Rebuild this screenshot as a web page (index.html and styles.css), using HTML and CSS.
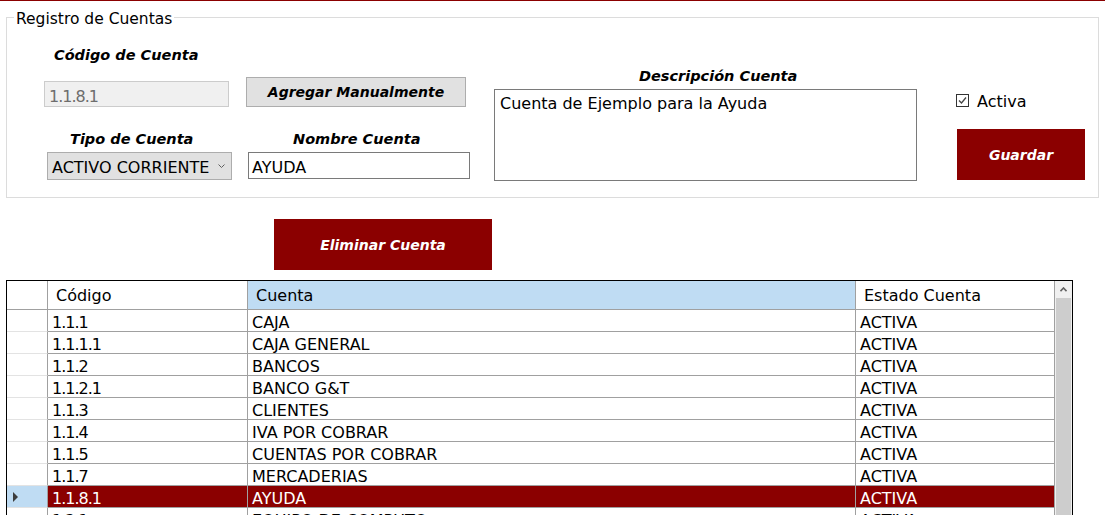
FILE: index.html
```html
<!DOCTYPE html>
<html lang="es">
<head>
<meta charset="utf-8">
<title>Registro de Cuentas</title>
<link rel="stylesheet" href="styles.css">
</head>
<body>
<div class="topline"></div>
<div class="group">
  <span class="legend">Registro de Cuentas</span>
  <div class="col col1">
    <div class="label l-codigo">Código de Cuenta</div>
    <div class="field disabled f-codigo code">1.1.8.1</div>
    <div class="label l-tipo">Tipo de Cuenta</div>
    <div class="select"><span class="select-text">ACTIVO CORRIENTE</span><svg class="chev" width="7" height="4" viewBox="0 0 7 4"><polyline points="0.5,0.5 3.5,3.5 6.5,0.5" fill="none" stroke="#606060" stroke-width="1"/></svg></div>
  </div>
  <div class="col col2">
    <div class="btn-gray">Agregar Manualmente</div>
    <div class="label l-nombre">Nombre Cuenta</div>
    <div class="field f-nombre">AYUDA</div>
  </div>
  <div class="col col3">
    <div class="label l-desc">Descripción Cuenta</div>
    <div class="textarea">Cuenta de Ejemplo para la Ayuda</div>
  </div>
  <div class="col col4">
    <div class="check"><svg class="box" width="13" height="13" viewBox="0 0 13 13"><rect x="0.5" y="0.5" width="12" height="12" fill="#fff" stroke="#333"/><polyline points="3,6.5 5.5,9 10,3.5" fill="none" stroke="#444" stroke-width="1.3"/></svg><span>Activa</span></div>
    <div class="btn-red btn-guardar">Guardar</div>
  </div>
</div>
<div class="btn-red btn-eliminar">Eliminar Cuenta</div>
<div class="grid">
  <div class="table">
    <div class="row head">
      <div class="rh"></div>
      <div>Código</div>
      <div class="hl">Cuenta</div>
      <div>Estado Cuenta</div>
    </div>
    <div class="row"><div class="rh"></div><div class="code">1.1.1</div><div>CAJA</div><div>ACTIVA</div></div>
    <div class="row"><div class="rh"></div><div class="code">1.1.1.1</div><div>CAJA GENERAL</div><div>ACTIVA</div></div>
    <div class="row"><div class="rh"></div><div class="code">1.1.2</div><div>BANCOS</div><div>ACTIVA</div></div>
    <div class="row"><div class="rh"></div><div class="code">1.1.2.1</div><div>BANCO G&amp;T</div><div>ACTIVA</div></div>
    <div class="row"><div class="rh"></div><div class="code">1.1.3</div><div>CLIENTES</div><div>ACTIVA</div></div>
    <div class="row"><div class="rh"></div><div class="code">1.1.4</div><div>IVA POR COBRAR</div><div>ACTIVA</div></div>
    <div class="row"><div class="rh"></div><div class="code">1.1.5</div><div>CUENTAS POR COBRAR</div><div>ACTIVA</div></div>
    <div class="row"><div class="rh"></div><div class="code">1.1.7</div><div>MERCADERIAS</div><div>ACTIVA</div></div>
    <div class="row selected"><div class="rh"><svg class="pointer" width="5" height="10" viewBox="0 0 5 10"><polygon points="0,0 5,5 0,10" fill="#3c3c3c"/></svg></div><div class="code">1.1.8.1</div><div>AYUDA</div><div>ACTIVA</div></div>
    <div class="row"><div class="rh"></div><div class="code">1.2.1</div><div>EQUIPO DE COMPUTO</div><div>ACTIVA</div></div>
  </div>
  <div class="vscroll">
    <div class="sb-up"><svg width="7" height="5" viewBox="0 0 7 5"><polyline points="0.5,4.2 3.5,1 6.5,4.2" fill="none" stroke="#606060" stroke-width="1.6"/></svg></div>
    <div class="sb-thumb"></div>
  </div>
</div>
</body>
</html>
```
FILE: styles.css
```css
body {
  margin: 0;
  width: 1105px;
  height: 515px;
  overflow: hidden;
  background: #fff;
  color: #000;
  font-family: "DejaVu Sans", "Liberation Sans", sans-serif;
  font-size: 16px;
}

.topline {
  height: 1px;
  background: #8b0000;
}

.group {
  position: relative;
  display: flex;
  align-items: flex-start;
  box-sizing: border-box;
  width: 1093px;
  height: 181px;
  margin: 16px 0 0 6px;
  border: 1px solid #dcdcdc;
}

.legend {
  position: absolute;
  top: -8px;
  left: 7px;
  padding: 0 2px;
  background: #fff;
  font-size: 15.5px;
  line-height: 18px;
  white-space: nowrap;
}

.label {
  font-weight: bold;
  font-style: italic;
  font-size: 14.5px;
  line-height: 17px;
  white-space: nowrap;
}

.col {
  display: flex;
  flex-direction: column;
  flex: none;
}

.col1 { margin-left: 37px; width: 188px; }
.col2 { margin-left: 14px; width: 224px; }
.col3 { margin-left: 24px; width: 423px; }
.col4 { margin-left: 39px; width: 130px; }

.l-codigo { margin-top: 29px; padding-left: 10px; }
.l-tipo { margin-top: 24px; padding-left: 26px; }
.l-nombre { margin-top: 24px; padding-left: 47px; }
.l-desc { margin-top: 50px; padding-left: 145px; }

.field {
  box-sizing: border-box;
  border: 1px solid #7a7a7a;
  background: #fff;
  padding: 5px 0 0 3px;
  line-height: 19px;
  white-space: nowrap;
}

.f-codigo {
  margin-top: 17px;
  width: 185px;
  height: 26px;
  padding-left: 4px;
  background: #f0f0f0;
  border-color: #cccccc;
  color: #6d6d6d;
}

.f-nombre {
  margin-top: 4px;
  margin-left: 2px;
  width: 222px;
  height: 27px;
}

.code { letter-spacing: -1px; }

.select {
  display: flex;
  align-items: flex-start;
  box-sizing: border-box;
  margin-top: 4px;
  margin-left: 3px;
  width: 185px;
  height: 28px;
  padding-left: 4px;
  border: 1px solid #adadad;
  background: #e1e1e1;
}

.select-text {
  padding-top: 5px;
  line-height: 19px;
  white-space: nowrap;
}

.chev {
  margin: 11px 6px 0 auto;
}

.btn-gray {
  display: flex;
  align-items: center;
  justify-content: center;
  box-sizing: border-box;
  margin-top: 59px;
  width: 220px;
  height: 30px;
  border: 1px solid #adadad;
  background: #e1e1e1;
  font-weight: bold;
  font-style: italic;
  font-size: 14px;
  white-space: nowrap;
}

.textarea {
  box-sizing: border-box;
  margin-top: 4px;
  height: 92px;
  padding: 4px 5px;
  border: 1px solid #7a7a7a;
  line-height: 19px;
}

.check {
  display: flex;
  align-items: flex-start;
  margin-top: 74px;
  line-height: 19px;
}

.box {
  flex: none;
  margin: 2px 8px 0 0;
}

.btn-red {
  display: flex;
  align-items: center;
  justify-content: center;
  background: #8b0000;
  color: #fff;
  font-weight: bold;
  font-style: italic;
  font-size: 14px;
  white-space: nowrap;
}

.btn-guardar {
  margin: 18px 0 0 1px;
  width: 128px;
  height: 51px;
}

.btn-eliminar {
  margin: 21px 0 0 274px;
  width: 218px;
  height: 51px;
}

.grid {
  display: flex;
  box-sizing: border-box;
  margin: 10px 0 0 6px;
  width: 1067px;
  height: 240px;
  border: 1px solid #000;
}

.table {
  width: 1048px;
  flex: none;
}

.row {
  display: grid;
  grid-template-columns: 41px 200px 608px 199px;
  height: 22px;
}

.row > div {
  box-sizing: border-box;
  padding: 3px 0 0 4px;
  border-right: 1px solid #a0a0a0;
  border-bottom: 1px solid #a0a0a0;
  line-height: 19px;
  white-space: nowrap;
  overflow: hidden;
}

.row > .rh {
  padding: 0;
  border-bottom-color: #e3e3e3;
}

.head { height: 29px; }

.head > div {
  padding: 2px 0 0 8px;
  line-height: 26px;
}

.head > .rh { border-bottom-color: #a0a0a0; }

.head > .hl { background: #bfdcf3; }

.selected > div {
  background: #8b0000;
  color: #fff;
}

.selected > .rh {
  display: flex;
  align-items: center;
  background: #bfdcf3;
}

.pointer {
  margin-left: 6px;
}

.vscroll {
  display: flex;
  flex-direction: column;
  width: 17px;
  flex: none;
  background: #f0f0f0;
}

.sb-up {
  display: flex;
  align-items: center;
  justify-content: center;
  height: 17px;
}

.sb-thumb {
  flex: 1;
  margin: 0 1px;
  background: #cdcdcd;
}
```
